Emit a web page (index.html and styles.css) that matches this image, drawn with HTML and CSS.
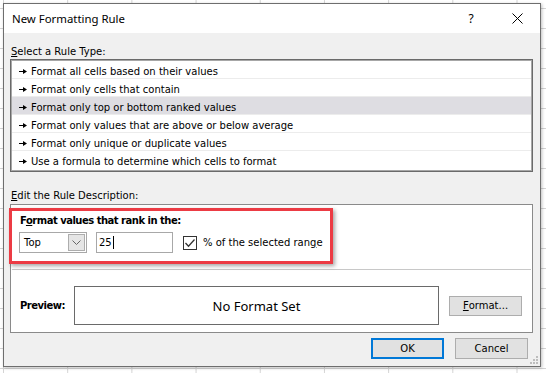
FILE: index.html
```html
<!DOCTYPE html>
<html>
<head>
<meta charset="utf-8">
<link rel="stylesheet" href="styles.css">
</head>
<body>
<div class="dialog">
  <div class="titlebar">
    <span class="title">New Formatting Rule</span>
    <span class="tb-btn help">?</span>
    <span class="tb-btn close">
      <svg width="11" height="11" viewBox="0 0 11 11"><path d="M0.5 0.5L10.5 10.5M10.5 0.5L0.5 10.5" stroke="#000" stroke-width="1" fill="none"/></svg>
    </span>
  </div>
  <div class="content">
    <div class="label first"><u>S</u>elect a Rule Type:</div>
    <ul class="rules">
      <li class="rule"><svg class="arrow" width="8" height="5" viewBox="0 0 8 5"><path d="M0 2H4V0L8 2.5L4 5V3H0Z" fill="#000"/></svg>Format all cells based on their values</li>
      <li class="rule"><svg class="arrow" width="8" height="5" viewBox="0 0 8 5"><path d="M0 2H4V0L8 2.5L4 5V3H0Z" fill="#000"/></svg>Format only cells that contain</li>
      <li class="rule selected"><svg class="arrow" width="8" height="5" viewBox="0 0 8 5"><path d="M0 2H4V0L8 2.5L4 5V3H0Z" fill="#000"/></svg>Format only top or bottom ranked values</li>
      <li class="rule"><svg class="arrow" width="8" height="5" viewBox="0 0 8 5"><path d="M0 2H4V0L8 2.5L4 5V3H0Z" fill="#000"/></svg>Format only values that are above or below average</li>
      <li class="rule"><svg class="arrow" width="8" height="5" viewBox="0 0 8 5"><path d="M0 2H4V0L8 2.5L4 5V3H0Z" fill="#000"/></svg>Format only unique or duplicate values</li>
      <li class="rule last"><svg class="arrow" width="8" height="5" viewBox="0 0 8 5"><path d="M0 2H4V0L8 2.5L4 5V3H0Z" fill="#000"/></svg>Use a formula to determine which cells to format</li>
    </ul>
    <div class="label second"><u>E</u>dit the Rule Description:</div>
    <div class="desc">
      <div class="rank">
        <div class="rank-title">F<u>o</u>rmat values that rank in the:</div>
        <div class="rank-row">
          <div class="combo">
            <span class="combo-value">Top</span>
            <span class="combo-btn">
              <svg width="9" height="5" viewBox="0 0 9 5"><path d="M0.5 0.5L4.5 4.5L8.5 0.5" stroke="#666" stroke-width="1" fill="none"/></svg>
            </span>
          </div>
          <div class="textbox">25<span class="caret"></span></div>
          <span class="checkbox">
            <svg width="12" height="12" viewBox="0 0 12 12"><path d="M1.5 6L4.5 9.2L10.5 2.5" stroke="#333" stroke-width="1.3" fill="none"/></svg>
          </span>
          <span class="check-label">% of the selected ran<u>g</u>e</span>
        </div>
      </div>
      <div class="highlight"></div>
      <div class="separator"></div>
      <div class="preview-row">
        <span class="preview-label">Preview:</span>
        <div class="preview-box">No Format Set</div>
        <span class="btn format-btn"><u>F</u>ormat...</span>
      </div>
    </div>
    <div class="buttons">
      <span class="btn ok">OK</span>
      <span class="btn">Cancel</span>
    </div>
  </div>
  <svg class="grip" width="8" height="8" viewBox="0 0 8 8">
    <rect x="6" y="0" width="2" height="2" fill="#bdbdbd"/>
    <rect x="3" y="3" width="2" height="2" fill="#bdbdbd"/>
    <rect x="6" y="3" width="2" height="2" fill="#bdbdbd"/>
    <rect x="0" y="6" width="2" height="2" fill="#bdbdbd"/>
    <rect x="3" y="6" width="2" height="2" fill="#bdbdbd"/>
    <rect x="6" y="6" width="2" height="2" fill="#bdbdbd"/>
  </svg>
</div>
</body>
</html>
```
FILE: styles.css
```css
html, body {
  margin: 0;
  padding: 0;
}
body {
  width: 546px;
  height: 373px;
  overflow: hidden;
  background-color: #fff;
  background-image:
    linear-gradient(to right, #d4d4d4 1px, transparent 1px),
    linear-gradient(to bottom, #d4d4d4 1px, transparent 1px);
  background-size: 64.2px 20px;
  background-position: 3px 8px;
  font-family: "DejaVu Sans", sans-serif;
  font-size: 10px;
  color: #000;
}
.dialog {
  position: relative;
  margin: 3px 0 0 3px;
  width: 538px;
  height: 364px;
  box-sizing: border-box;
  border: 1px solid #6e6e6e;
  background: #f0f0f0;
  box-shadow: 1px 1px 3px rgba(0, 0, 0, 0.25);
  display: flex;
  flex-direction: column;
}
.titlebar {
  height: 29px;
  background: #fff;
  display: flex;
  align-items: center;
  padding-left: 8px;
}
.title {
  flex: 1;
  font-family: "Noto Sans", sans-serif;
  font-size: 11.4px;
  padding-bottom: 1px;
}
.tb-btn {
  width: 46px;
  height: 29px;
  display: flex;
  align-items: center;
  justify-content: center;
}
.help {
  font-family: "Noto Sans", sans-serif;
  font-size: 12px;
}
.content {
  padding: 0 7px 0 6px;
  display: flex;
  flex-direction: column;
}
.label {
  line-height: 13px;
  padding-left: 1px;
}
.label.first {
  margin-top: 12px;
}
.label.second {
  margin-top: 17px;
}
.rules {
  list-style: none;
  margin: 1px 0 0 0;
  height: 113px;
  box-sizing: border-box;
  border: 1px solid #6a6a6a;
  box-shadow: inset 0 0 0 1px #a7a7a7;
  background: #fff;
  padding: 1px 1px;
}
.rule {
  height: 18px;
  box-sizing: border-box;
  border-bottom: 1px solid #ececec;
  display: flex;
  align-items: center;
  padding-left: 7px;
  padding-top: 3px;
  white-space: nowrap;
}
.rule.last {
  border-bottom: none;
}
.rule.selected {
  background: #dedde2;
}
.arrow {
  margin-right: 4px;
  flex: none;
}
.desc {
  position: relative;
  margin-top: 2px;
  height: 129px;
  box-sizing: border-box;
  border: 1px solid #8a8a8a;
  background: #fff;
}
.rank {
  padding: 9px 0 0 9px;
}
.rank-title {
  font-weight: bold;
  line-height: 13px;
  letter-spacing: -0.5px;
}
.rank-row {
  display: flex;
  align-items: center;
  margin-top: 5px;
  margin-left: -1px;
  height: 21px;
}
.combo {
  width: 68px;
  height: 21px;
  box-sizing: border-box;
  border: 1px solid #a8a8a8;
  display: flex;
  align-items: center;
  padding: 1px;
}
.combo-value {
  flex: 1;
  padding-left: 3px;
}
.combo-btn {
  width: 17px;
  height: 17px;
  box-sizing: border-box;
  border: 1px solid #adadad;
  background: #e5e5e5;
  display: flex;
  align-items: center;
  justify-content: center;
}
.textbox {
  margin-left: 9px;
  width: 77px;
  height: 21px;
  box-sizing: border-box;
  border: 1px solid #a8a8a8;
  display: flex;
  align-items: center;
  padding-left: 2px;
}
.caret {
  display: inline-block;
  width: 1px;
  height: 13px;
  background: #000;
  margin-left: 1px;
}
.checkbox {
  margin-left: 10px;
  width: 14px;
  height: 14px;
  box-sizing: border-box;
  border: 1px solid #333;
  display: flex;
  align-items: center;
  justify-content: center;
  background: #fff;
}
.check-label {
  margin-left: 6px;
}
.highlight {
  position: absolute;
  left: -2px;
  top: 3px;
  width: 324px;
  height: 56px;
  box-sizing: border-box;
  border: 3px solid #ec3b44;
  box-shadow: 2px 2px 4px rgba(0, 0, 0, 0.35);
}
.separator {
  margin: 16px 1px 0 1px;
  height: 1px;
  background: #c8c8c8;
}
.preview-row {
  display: flex;
  align-items: center;
  margin-top: 16px;
  padding-left: 9px;
}
.preview-label {
  font-weight: bold;
  letter-spacing: -0.5px;
  width: 54px;
}
.preview-box {
  width: 365px;
  height: 39px;
  box-sizing: border-box;
  border: 1px solid #6a6a6a;
  display: flex;
  align-items: center;
  justify-content: center;
  font-family: "Noto Sans", sans-serif;
  font-size: 13px;
}
.btn {
  width: 73px;
  height: 21px;
  box-sizing: border-box;
  border: 1px solid #adadad;
  background: #e1e1e1;
  display: flex;
  align-items: center;
  justify-content: center;
}
.format-btn {
  margin-left: 10px;
  height: 20px;
}
.buttons {
  display: flex;
  justify-content: flex-end;
  gap: 11px;
  margin-top: 5px;
  padding-right: 5px;
}
.btn.ok {
  border: 2px solid #0078d7;
}
.grip {
  position: absolute;
  right: 2px;
  bottom: 2px;
}
```
